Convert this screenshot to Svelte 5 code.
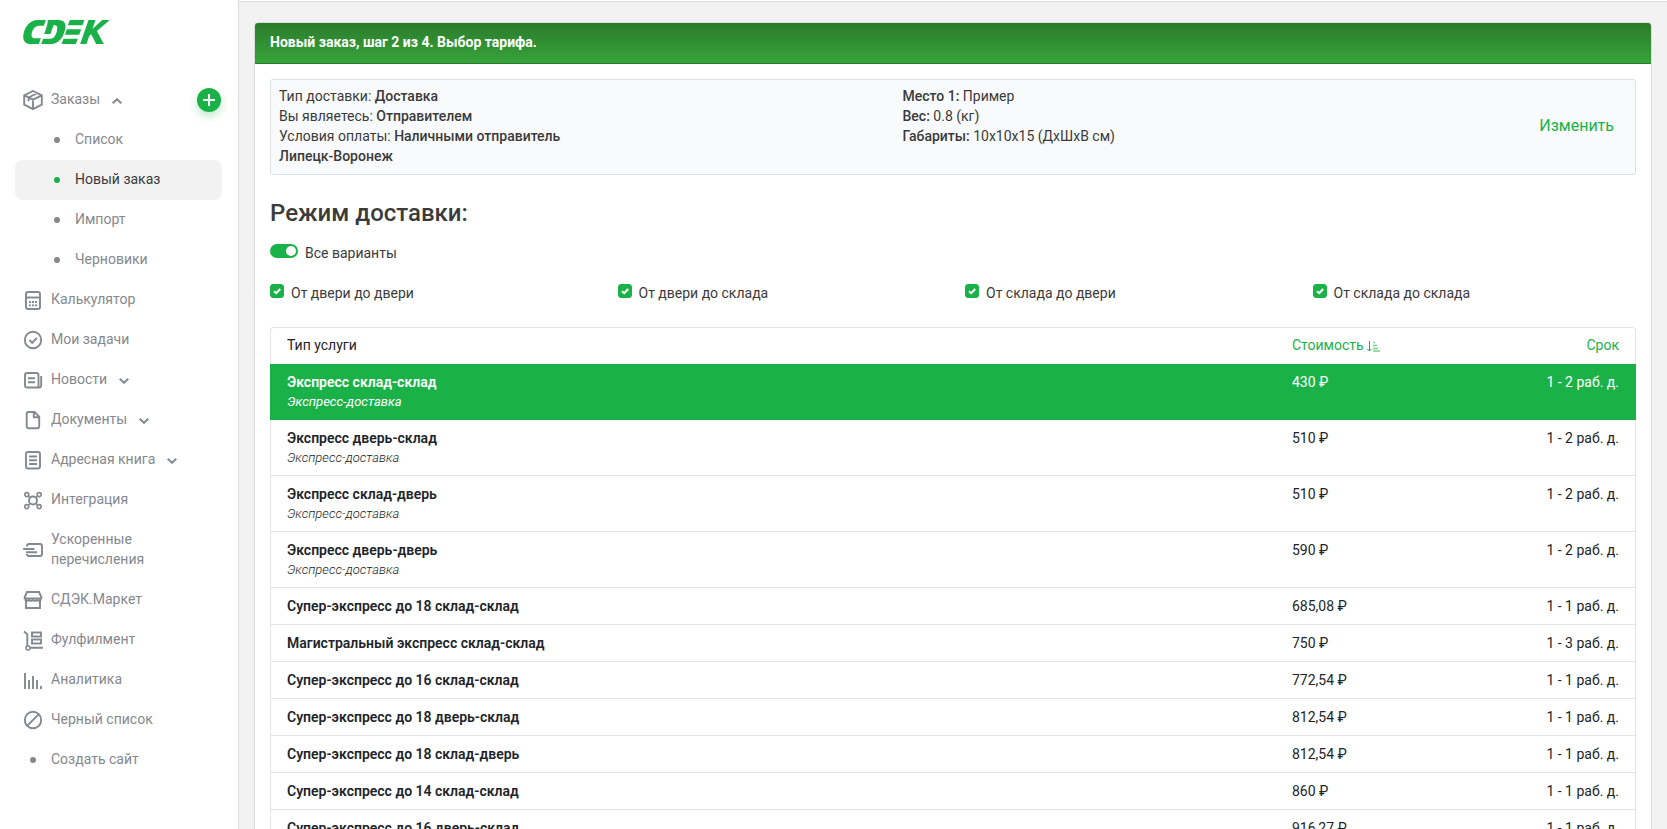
<script lang="ts">
	interface NavItem {
		label: string;
		icon: string;
		expandable?: boolean;
	}

	interface Tariff {
		name: string;
		kind?: string;
		price: string;
		term: string;
	}

	const orderLinks = ['Список', 'Новый заказ', 'Импорт', 'Черновики'];

	const nav: NavItem[] = [
		{ label: 'Калькулятор', icon: 'calculator' },
		{ label: 'Мои задачи', icon: 'tasks' },
		{ label: 'Новости', icon: 'news', expandable: true },
		{ label: 'Документы', icon: 'document', expandable: true },
		{ label: 'Адресная книга', icon: 'book', expandable: true },
		{ label: 'Интеграция', icon: 'integration' },
		{ label: 'Ускоренные перечисления', icon: 'transfer' },
		{ label: 'СДЭК.Маркет', icon: 'market' },
		{ label: 'Фулфилмент', icon: 'fulfilment' },
		{ label: 'Аналитика', icon: 'analytics' },
		{ label: 'Черный список', icon: 'ban' },
		{ label: 'Создать сайт', icon: 'dot' }
	];

	const tariffs: Tariff[] = [
		{ name: 'Экспресс склад-склад', kind: 'Экспресс-доставка', price: '430 ₽', term: '1 - 2 раб. д.' },
		{ name: 'Экспресс дверь-склад', kind: 'Экспресс-доставка', price: '510 ₽', term: '1 - 2 раб. д.' },
		{ name: 'Экспресс склад-дверь', kind: 'Экспресс-доставка', price: '510 ₽', term: '1 - 2 раб. д.' },
		{ name: 'Экспресс дверь-дверь', kind: 'Экспресс-доставка', price: '590 ₽', term: '1 - 2 раб. д.' },
		{ name: 'Супер-экспресс до 18 склад-склад', price: '685,08 ₽', term: '1 - 1 раб. д.' },
		{ name: 'Магистральный экспресс склад-склад', price: '750 ₽', term: '1 - 3 раб. д.' },
		{ name: 'Супер-экспресс до 16 склад-склад', price: '772,54 ₽', term: '1 - 1 раб. д.' },
		{ name: 'Супер-экспресс до 18 дверь-склад', price: '812,54 ₽', term: '1 - 1 раб. д.' },
		{ name: 'Супер-экспресс до 18 склад-дверь', price: '812,54 ₽', term: '1 - 1 раб. д.' },
		{ name: 'Супер-экспресс до 14 склад-склад', price: '860 ₽', term: '1 - 1 раб. д.' },
		{ name: 'Супер-экспресс до 16 дверь-склад', price: '916,27 ₽', term: '1 - 1 раб. д.' }
	];

	let activeLink = $state('Новый заказ');
	let ordersOpen = $state(true);
	let selected = $state(0);
	let modes = $state([
		{ label: 'От двери до двери', checked: true },
		{ label: 'От двери до склада', checked: true },
		{ label: 'От склада до двери', checked: true },
		{ label: 'От склада до склада', checked: true }
	]);
	let allModes = $derived(modes.every((m) => m.checked));

	function toggleAll() {
		const next = !allModes;
		modes.forEach((m) => (m.checked = next));
	}
</script>

{#snippet icon(name: string)}
	<svg class="icon" viewBox="0 0 24 24" aria-hidden="true">
		{#if name === 'box'}
			<path d="M12 3 20.8 7.3V16.7L12 21.2 3.2 16.7V7.3ZM3.4 7.4 12 11.7 20.6 7.4M12 11.7V21M16.2 5.2 7.6 9.5V13.2" />
		{:else if name === 'calculator'}
			<rect x="5" y="4" width="14" height="17" rx="2" />
			<path d="M5 9.5H19" />
			<path d="M8 14H10M11 14H13M14 14H16M8 17.4H10M11 17.4H13M14 17.4H16" />
		{:else if name === 'tasks'}
			<circle cx="12" cy="12" r="8.2" />
			<path d="M8.4 12 11.2 14.8 15.8 10" />
		{:else if name === 'news'}
			<path d="M18 19.5H6A2 2 0 0 1 4 17.5V7A2 2 0 0 1 6 5H15.5A2 2 0 0 1 17.5 7V19M20.2 8V17.5A2 2 0 0 1 18 19.5M7 10.3H14M7 14.2H14" />
		{:else if name === 'document'}
			<path d="M7.5 4H13.5L18.2 8.7V18.5A1.8 1.8 0 0 1 16.4 20.3H7.5A1.8 1.8 0 0 1 5.7 18.5V5.8A1.8 1.8 0 0 1 7.5 4ZM12.8 4.2V9.2H18" />
		{:else if name === 'book'}
			<rect x="5" y="4" width="14" height="16.5" rx="2" />
			<path d="M8 8.5H16M8 12.2H16M8 16H16" />
		{:else if name === 'integration'}
			<circle cx="12" cy="12.5" r="4" />
			<circle class="thin" cx="5.8" cy="6.6" r="2" />
			<circle class="thin" cx="18.2" cy="6.6" r="2" />
			<circle class="thin" cx="5.8" cy="18.6" r="2" />
			<circle class="thin" cx="18.2" cy="18.6" r="2" />
			<path class="thin" d="M7.4 8.1 9 9.6M16.6 8.1 15 9.6M7.4 17 9 15.5M16.6 17 15 15.5" />
		{:else if name === 'transfer'}
			<path d="M6 8.5V8A2 2 0 0 1 8 6H19A2 2 0 0 1 21 8V16A2 2 0 0 1 19 18H8A2 2 0 0 1 6 16M2.2 11H13.5M5 14.3H16" />
		{:else if name === 'market'}
			<path d="M6 4H18L20.3 9V10.5H3.7V9ZM5 11V20H19V11" />
			<path d="M4 12A2.5 2 0 0 0 8 12 2.5 2 0 0 0 12 12 2.5 2 0 0 0 16 12 2.5 2 0 0 0 20 12" />
		{:else if name === 'fulfilment'}
			<path d="M3 3.5 6.3 6.2V18M9 19.7H22" />
			<circle class="thin" cx="7" cy="20" r="2" />
			<rect x="11" y="4.5" width="9" height="4" />
			<rect x="11" y="11.5" width="9" height="4" />
		{:else if name === 'analytics'}
			<path d="M4 5V21M8 12V21M12 8V21M16 12V21M20 18V21" />
		{:else if name === 'ban'}
			<circle cx="12" cy="12" r="8.2" />
			<path d="M6.3 17.7 17.7 6.3" />
		{:else}
			<circle class="dot-shape" cx="12" cy="12" r="3" />
		{/if}
	</svg>
{/snippet}

{#snippet chevron(up: boolean)}
	<svg class="chevron" class:up viewBox="0 0 10 6" aria-hidden="true">
		<path d="M0.7 0.8 5 4.8 9.3 0.8" />
	</svg>
{/snippet}

<div class="layout">
	<aside class="sidebar">
		<a class="logo" href="#home" aria-label="CDEK">
			<svg viewBox="0 0 260 72" aria-hidden="true">
				<path d="M68 0 62 17H47C36 17 26 30 25 44 25 52 29 55 36 55H53L47 72H22C7 72 0 62 0 50 2 22 20 0 44 0Z" />
				<path d="M74 0H106C124 0 130 12 126 28 120 54 106 72 84 72H54L60 56H84C92 56 98 46 101 34 104 21 102 16 94 16H91L82 42H63L72 16Z" />
				<path d="M140 0H184L178 16H134ZM131 28H174L168 44H125ZM121 56H164L158 72H115Z" />
				<path d="M196 0H217L208 27 237 0H260L221 33 242 72H219L204 43 198 48 190 72H171Z" />
			</svg>
		</a>

		<nav>
			<div class="nav-head">
				<button class="nav-item" aria-expanded={ordersOpen} onclick={() => (ordersOpen = !ordersOpen)}>
					{@render icon('box')}
					<span>Заказы</span>
					{@render chevron(ordersOpen)}
				</button>
				<button class="add" aria-label="Создать заказ">
					<svg viewBox="0 0 12 12" aria-hidden="true"><path d="M6 0V12M0 6H12" /></svg>
				</button>
			</div>

			{#if ordersOpen}
				{#each orderLinks as link}
					<a
						class="nav-item sub"
						class:active={link === activeLink}
						href="#orders"
						onclick={() => (activeLink = link)}
					>
						<i class="bullet"></i>
						<span>{link}</span>
					</a>
				{/each}
			{/if}

			{#each nav as item}
				<a class="nav-item" href="#section">
					{@render icon(item.icon)}
					<span>{item.label}</span>
					{#if item.expandable}
						{@render chevron(false)}
					{/if}
				</a>
			{/each}
		</nav>
	</aside>

	<main>
		<div class="topbar"></div>

		<section class="card">
			<h1>Новый заказ, шаг 2 из 4. Выбор тарифа.</h1>

			<div class="card-body">
				<div class="summary">
					<div>
						<div>Тип доставки: <b>Доставка</b></div>
						<div>Вы являетесь: <b>Отправителем</b></div>
						<div>Условия оплаты: <b>Наличными отправитель</b></div>
						<div><b>Липецк-Воронеж</b></div>
					</div>
					<div>
						<div><b>Место 1:</b> Пример</div>
						<div><b>Вес:</b> 0.8 (кг)</div>
						<div><b>Габариты:</b> 10x10x15 (ДхШхВ см)</div>
					</div>
					<a class="edit" href="#edit">Изменить</a>
				</div>

				<h2>Режим доставки:</h2>

				<label class="option">
					<input class="switch" type="checkbox" checked={allModes} onchange={toggleAll} />
					Все варианты
				</label>

				<div class="modes">
					{#each modes as mode}
						<label class="option">
							<span class="check">
								<input type="checkbox" bind:checked={mode.checked} />
								<svg viewBox="0 0 14 14" aria-hidden="true"><path d="M4 7.2 6.2 9.2 10.2 5" /></svg>
							</span>
							{mode.label}
						</label>
					{/each}
				</div>

				<table>
					<thead>
						<tr>
							<th>Тип услуги</th>
							<th class="price">
								<a href="#price">
									Стоимость
									<svg class="sort" viewBox="0 0 13 11" aria-hidden="true">
										<path d="M2.5 0V10M0.5 8 2.5 10 4.5 8" />
										<path class="bars" d="M6 1.5H8M6 4.5H10M6 7.5H11M6 10H13" />
									</svg>
								</a>
							</th>
							<th class="term"><a href="#term">Срок</a></th>
						</tr>
					</thead>
					<tbody>
						{#each tariffs as tariff, i}
							<tr class:selected={i === selected} onclick={() => (selected = i)}>
								<td>
									<div class="name">{tariff.name}</div>
									{#if tariff.kind}
										<div class="kind">{tariff.kind}</div>
									{/if}
								</td>
								<td class="price">{tariff.price}</td>
								<td class="term">{tariff.term}</td>
							</tr>
						{/each}
					</tbody>
				</table>
			</div>
		</section>
	</main>
</div>

<style>
	:global(body) {
		font-family: Roboto, 'Liberation Sans', sans-serif;
		font-size: 14px;
		line-height: 20px;
		color: #3b3b3b;
		background: #f2f2f2;
	}

	.layout {
		--green: #1ab248;
		--gray: #85888e;
		display: flex;
		height: 100vh;
	}

	.layout :global(*) {
		box-sizing: border-box;
	}

	a {
		color: var(--green);
		text-decoration: none;
	}

	button {
		font: inherit;
		border: 0;
		background: none;
		cursor: pointer;
	}

	svg {
		fill: none;
		stroke: currentColor;
	}

	/* Sidebar */
	.sidebar {
		flex: none;
		width: 239px;
		border-right: 1px solid #ddd;
		background: #fff;
		overflow: hidden;
	}

	.logo {
		display: block;
		padding: 20px 23px 36px;
	}

	.logo svg {
		display: block;
		width: 87px;
		height: 24px;
		fill: var(--green);
		stroke: none;
	}

	nav {
		padding: 0 16px 0 15px;
	}

	.nav-head {
		display: flex;
		align-items: center;
		justify-content: space-between;
	}

	.nav-item {
		display: flex;
		align-items: center;
		gap: 6px;
		min-height: 40px;
		padding: 9px 6px;
		border-radius: 8px;
		color: var(--gray);
	}

	.nav-item span {
		padding-bottom: 2px;
	}

	.nav-item.sub {
		gap: 15px;
		padding-left: 39px;
	}

	.nav-item.active {
		background: #f2f2f2;
		color: #3b3b3b;
	}

	.icon {
		flex: none;
		width: 24px;
		height: 24px;
		margin: -2px 0;
		stroke-width: 1.9;
	}

	.icon .thin {
		stroke-width: 1.6;
	}

	.dot-shape {
		fill: currentColor;
		stroke: none;
	}

	.bullet {
		width: 6px;
		height: 6px;
		border-radius: 50%;
		background: var(--gray);
	}

	.active .bullet {
		background: var(--green);
	}

	.chevron {
		width: 10px;
		height: 6px;
		margin: 2px 0 0 6px;
		stroke-width: 2;
	}

	.chevron.up {
		transform: rotate(180deg);
	}

	.add {
		display: grid;
		place-items: center;
		width: 24px;
		height: 24px;
		margin-right: 1px;
		padding: 0;
		border-radius: 50%;
		background: var(--green);
		color: #fff;
		box-shadow: 0 4px 8px rgba(26, 178, 72, 0.3);
	}

	.add svg {
		width: 12px;
		height: 12px;
		stroke-width: 2;
	}

	/* Content */
	main {
		flex: 1;
		min-width: 0;
		overflow-y: auto;
		scrollbar-width: none;
	}

	.topbar {
		height: 2px;
		border-bottom: 1px solid #ddd;
		background: #fff;
	}

	.card {
		margin: 20px 15px;
		border: 1px solid #ddd;
		border-radius: 4px;
		background: #fff;
	}

	h1 {
		margin: 0;
		padding: 9px 15px 11px;
		border-bottom: 1px solid #2a7b2a;
		border-radius: 3px 3px 0 0;
		background: linear-gradient(#2b7c2c, #37a33a);
		color: #fff;
		font-size: 14px;
		font-weight: 700;
	}

	.card-body {
		padding: 15px;
	}

	.summary {
		display: grid;
		grid-template-columns: 1fr 1fr 88px;
		padding: 6px 21px 8px 8px;
		border: 1px solid #dee2e6;
		border-radius: 3px;
		background: #f8fafc;
	}

	.summary b {
		font-weight: 500;
	}

	.edit {
		align-self: center;
		text-align: right;
		font-size: 16px;
	}

	h2 {
		margin: 23px 0 15px;
		font-size: 24px;
		line-height: 30px;
		font-weight: 500;
	}

	.option {
		display: flex;
		gap: 7px;
	}

	.option input {
		appearance: none;
		margin: 0;
	}

	.option .switch {
		display: flex;
		width: 28px;
		height: 14px;
		margin-top: 1px;
		padding: 2px;
		border-radius: 7px;
		background: #bbb;
	}

	.switch::before {
		content: '';
		width: 10px;
		height: 10px;
		border-radius: 50%;
		background: #fff;
	}

	.option .switch:checked {
		justify-content: flex-end;
		background: var(--green);
	}

	.modes {
		display: grid;
		grid-template-columns: repeat(4, 1fr);
		gap: 24px;
		margin: 20px 0 24px;
	}

	.check {
		display: grid;
		width: 14px;
		height: 14px;
		margin-top: 1px;
	}

	.check > * {
		grid-area: 1 / 1;
	}

	.check input {
		border: 1px solid #bbb;
		border-radius: 3px;
	}

	.check input:checked {
		border-color: var(--green);
		background: var(--green);
	}

	.check svg {
		width: 14px;
		height: 14px;
		color: #fff;
		stroke-width: 2;
		pointer-events: none;
	}

	/* Tariffs */
	table {
		width: 100%;
		table-layout: fixed;
		border-spacing: 0;
		color: #212529;
	}

	th,
	td {
		padding: 8px 16px;
		border: 0 solid #e4e4e4;
		text-align: left;
		vertical-align: top;
	}

	th {
		padding: 7px 16px 9px;
		border-top-width: 1px;
		font-weight: 400;
	}

	td {
		border-bottom-width: 1px;
	}

	th:first-child,
	td:first-child {
		border-left-width: 1px;
	}

	th:last-child,
	td:last-child {
		border-right-width: 1px;
	}

	th:first-child {
		border-top-left-radius: 4px;
	}

	th:last-child {
		border-top-right-radius: 4px;
	}

	.price {
		width: 180px;
	}

	.term {
		width: 180px;
		text-align: right;
	}

	.sort {
		width: 13px;
		height: 11px;
		vertical-align: -2px;
	}

	.sort .bars {
		opacity: 0.6;
		stroke-width: 1.5;
	}

	.name {
		font-weight: 600;
	}

	.kind {
		font-size: 13px;
		line-height: 19px;
		font-style: italic;
		font-weight: 300;
	}

	.selected td {
		border-color: var(--green);
		background: var(--green);
		color: #fff;
	}

	.selected .kind {
		font-weight: 400;
	}
</style>
